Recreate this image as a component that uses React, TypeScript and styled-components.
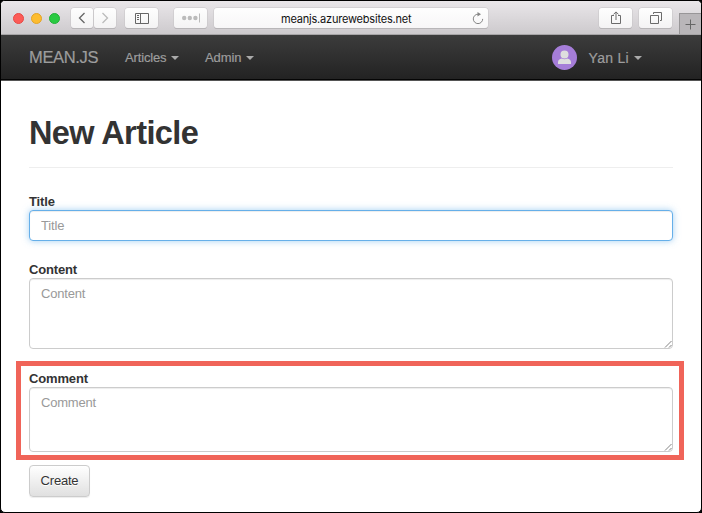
import React from 'react';
import styled, { createGlobalStyle } from 'styled-components';

const GlobalStyle = createGlobalStyle`
  * { box-sizing: border-box; }
  body { margin: 0; background: #000; font-family: "Liberation Sans", Arial, sans-serif; }
  button, input, textarea { font-family: inherit; margin: 0; }
`;

const Window = styled.div`
  width: 702px;
  height: 513px;
  border: 1px solid #000;
  border-radius: 5px;
  overflow: hidden;
  background: #fff;
`;

const Toolbar = styled.header`
  display: flex;
  align-items: flex-start;
  height: 34px;
  padding: 7px 0 0 12px;
  background: linear-gradient(#e9e6e9, #cdcacd);
  border-bottom: 1px solid #a7a5a7;
`;

const Lights = styled.div`
  display: flex;
  gap: 7px;
  width: 58px;
  padding-top: 5px;
`;

const Light = styled.span<{ $color: string; $edge: string }>`
  width: 11px;
  height: 11px;
  border-radius: 50%;
  background: ${(p) => p.$color};
  border: 1px solid ${(p) => p.$edge};
`;

const ToolButton = styled.button<{ $width: number; $gap?: number }>`
  display: flex;
  align-items: center;
  justify-content: center;
  flex: none;
  width: ${(p) => p.$width}px;
  height: 20px;
  margin-left: ${(p) => p.$gap ?? 0}px;
  padding: 0;
  border: 0;
  border-radius: 3px;
  background: linear-gradient(#fefefe, #f4f3f4);
  box-shadow: 0 0 0 0.5px #c6c3c6, 0 1px 0 #aaa8aa;
`;

const AddressBar = styled.div`
  display: flex;
  align-items: center;
  flex: none;
  width: 274px;
  height: 20px;
  margin-left: 7px;
  padding: 0 4px 0 67px;
  border-radius: 3px;
  background: linear-gradient(#fefefe, #f7f6f7);
  box-shadow: 0 0 0 0.5px #c6c3c6, 0 1px 0 #aaa8aa;
`;

const Address = styled.span`
  flex: 1;
  padding-top: 1px;
  font: 11px/20px Inter, sans-serif;
  letter-spacing: -0.2px;
  color: #111;
`;

const NewTab = styled.button`
  display: flex;
  align-items: center;
  justify-content: center;
  width: 22px;
  height: 21px;
  margin: 5px 0 0 7px;
  padding: 0 1px 0 0;
  border: 1px solid #989698;
  border-width: 1px 0 0 1px;
  background: #b9b6b9;
`;

const Navbar = styled.nav`
  display: flex;
  align-items: center;
  height: 46px;
  padding: 0 59px 0 28px;
  color: #9d9d9d;
  background: linear-gradient(#3c3c3c, #222);
  border-bottom: 1px solid #555;
  box-shadow: inset 0 -1px #050505;
`;

const Brand = styled.a`
  width: 96px;
  font-size: 16.5px;
  letter-spacing: -0.35px;
  -webkit-text-stroke: 0.2px;
`;

const MenuLink = styled.a<{ $width?: number; $size?: number; $tracking?: number }>`
  display: flex;
  align-items: center;
  gap: 5px;
  width: ${(p) => (p.$width ? `${p.$width}px` : 'auto')};
  font-size: ${(p) => p.$size ?? 13}px;
  letter-spacing: ${(p) => p.$tracking ?? 0}px;
  -webkit-text-stroke: 0.2px;
`;

const Caret = styled.i`
  margin-top: 1px;
  border: 4px solid transparent;
  border-top-color: #aaa;
  border-bottom: 0;
`;

const Account = styled.div`
  display: flex;
  align-items: center;
  gap: 12px;
  margin-left: auto;
`;

const Page = styled.main`
  padding: 34px 28px 0 28px;
  color: #333;
`;

const Heading = styled.h1`
  height: 53px;
  margin: 0;
  border-bottom: 1px solid #eee;
  font-size: 32.5px;
  line-height: 37px;
  font-weight: bold;
  letter-spacing: -0.6px;
`;

const Form = styled.form`
  display: flex;
  flex-direction: column;
  align-items: stretch;
  padding-top: 25px;
`;

const Field = styled.div<{ $gap: number }>`
  display: flex;
  flex-direction: column;
  margin-bottom: ${(p) => p.$gap}px;
`;

const HighlightedField = styled(Field)`
  height: 99px;
  margin: 0 -11px 5px -13px;
  padding: 4px 6px 0 8px;
  border: 5px solid #f06459;
`;

const Label = styled.label`
  height: 17px;
  font-size: 13px;
  font-weight: bold;
  line-height: 17px;
  letter-spacing: -0.15px;
`;

const TextInput = styled.input`
  height: 31px;
  padding: 0 11px;
  border: 1px solid #66afe9;
  border-radius: 4px;
  outline: 0;
  background: #fff;
  font-size: 13px;
  letter-spacing: -0.15px;
  box-shadow: inset 0 1px 1px rgba(0, 0, 0, 0.075), 0 0 7px rgba(102, 175, 233, 0.6);
  &::placeholder { color: #999; opacity: 1; }
`;

const TextBox = styled.div`
  display: grid;
`;

const TextArea = styled.textarea<{ $height: number }>`
  grid-area: 1 / 1;
  height: ${(p) => p.$height}px;
  padding: 6px 11px;
  border: 1px solid #ccc;
  border-radius: 4px;
  outline: 0;
  resize: none;
  overflow: hidden;
  background: #fff;
  font-size: 13px;
  line-height: 18px;
  letter-spacing: -0.2px;
  box-shadow: inset 0 1px 1px rgba(0, 0, 0, 0.075);
  &::placeholder { color: #999; opacity: 1; }
`;

const Grip = styled.svg`
  grid-area: 1 / 1;
  place-self: end;
  margin: 0 1px 1px 0;
  pointer-events: none;
`;

const CreateButton = styled.button`
  align-self: flex-start;
  width: 61px;
  height: 32px;
  padding: 0 0 2px;
  border: 1px solid #ccc;
  border-radius: 4px;
  color: #333;
  background: linear-gradient(#fff, #e0e0e0);
  font-size: 13px;
  letter-spacing: -0.2px;
  text-shadow: 0 1px 0 #fff;
  box-shadow: 0 1px 1px rgba(0, 0, 0, 0.075);
`;

const ResizeHandle = () => (
  <Grip width="8" height="8" viewBox="0 0 8 8" fill="none" stroke="#777" strokeWidth="0.9">
    <path d="M1 7.5 7.5 1M5 7.5 7.5 5" />
  </Grip>
);

const Chevron = ({ back = false }: { back?: boolean }) => (
  <svg width="8" height="12" viewBox="0 0 8 12" fill="none" stroke={back ? '#666' : '#bbb'} strokeWidth="1.3">
    <path d={back ? 'M6.5 1 1.5 6l5 5' : 'M1.5 1l5 5-5 5'} />
  </svg>
);

const SidebarIcon = () => (
  <svg width="14" height="11" viewBox="0 0 14 11" fill="none" stroke="#666">
    <path d="M.5.5h13v10H.5zM5.5.5v10M2 2.5h2M2 4.5h2M2 6.5h2" />
  </svg>
);

const DotsIcon = () => (
  <svg width="20" height="10" viewBox="0 0 20 10" fill="#bbb">
    <circle cx="3.2" cy="5" r="2.2" />
    <circle cx="8.8" cy="5" r="2.2" />
    <circle cx="14.4" cy="5" r="2.2" />
    <path d="M18 .5h1v9h-1z" />
  </svg>
);

const ReloadIcon = () => (
  <svg width="12" height="13" viewBox="0 0 12 13" fill="none" stroke="#858585" strokeWidth="1">
    <path d="M6 2.2a4.7 4.7 0 1 0 4.7 4.7" />
    <path d="M5.5 0 9 2.3 5.5 4.6z" fill="#858585" stroke="none" />
  </svg>
);

const ShareIcon = () => (
  <svg width="12" height="14" viewBox="0 0 12 14" fill="none" stroke="#6b6b6b">
    <path d="M4 4.5H1.5v8h9v-8H8M6 9V1M3.5 3.4 6 .9l2.5 2.5" />
  </svg>
);

const TabsIcon = () => (
  <svg width="12" height="12" viewBox="0 0 12 12" fill="none" stroke="#6b6b6b">
    <path d="M.5 3.5h8v8h-8zM3.5 2V.5h8v8H10" />
  </svg>
);

const PlusIcon = () => (
  <svg width="11" height="11" viewBox="0 0 11 11" stroke="#666">
    <path d="M5.5.5v10M.5 5.5h10" />
  </svg>
);

const Avatar = () => (
  <svg width="25" height="25" viewBox="0 0 25 25">
    <circle cx="12.5" cy="12.5" r="12.5" fill="#a57dd8" />
    <circle cx="12.5" cy="9.4" r="4" fill="#dedede" />
    <path d="M6 19v-1.8c0-2 1.6-3.1 3.7-3.7 1.7 1.1 3.9 1.1 5.6 0 2.1.6 3.7 1.7 3.7 3.7V19z" fill="#dedede" />
  </svg>
);

export default function App() {
  return (
    <>
      <GlobalStyle />
      <Window>
        <Toolbar>
          <Lights>
            <Light $color="#fc5b57" $edge="#e74844" />
            <Light $color="#fdbc2f" $edge="#e3a325" />
            <Light $color="#29ca42" $edge="#1fb236" />
          </Lights>
          <ToolButton $width={22} aria-label="Back"><Chevron back /></ToolButton>
          <ToolButton $width={22} $gap={1} aria-label="Forward"><Chevron /></ToolButton>
          <ToolButton $width={33} $gap={9} aria-label="Sidebar"><SidebarIcon /></ToolButton>
          <ToolButton $width={33} $gap={16} aria-label="More"><DotsIcon /></ToolButton>
          <AddressBar>
            <Address>meanjs.azurewebsites.net</Address>
            <ReloadIcon />
          </AddressBar>
          <ToolButton $width={33} $gap={111} aria-label="Share"><ShareIcon /></ToolButton>
          <ToolButton $width={33} $gap={7} aria-label="Tabs"><TabsIcon /></ToolButton>
          <NewTab aria-label="New tab"><PlusIcon /></NewTab>
        </Toolbar>
        <Navbar>
          <Brand>MEAN.JS</Brand>
          <MenuLink $width={80} $tracking={-0.15}>Articles<Caret /></MenuLink>
          <MenuLink $tracking={-0.1}>Admin<Caret /></MenuLink>
          <Account>
            <Avatar />
            <MenuLink $size={14} $tracking={0.3}>Yan Li<Caret /></MenuLink>
          </Account>
        </Navbar>
        <Page>
          <Heading>New Article</Heading>
          <Form>
            <Field $gap={20}>
              <Label htmlFor="title">Title</Label>
              <TextInput id="title" placeholder="Title" />
            </Field>
            <Field $gap={12}>
              <Label htmlFor="content">Content</Label>
              <TextBox>
                <TextArea id="content" $height={71} placeholder="Content" />
                <ResizeHandle />
              </TextBox>
            </Field>
            <HighlightedField $gap={5}>
              <Label htmlFor="comment">Comment</Label>
              <TextBox>
                <TextArea id="comment" $height={65} placeholder="Comment" />
                <ResizeHandle />
              </TextBox>
            </HighlightedField>
            <CreateButton type="button">Create</CreateButton>
          </Form>
        </Page>
      </Window>
    </>
  );
}
